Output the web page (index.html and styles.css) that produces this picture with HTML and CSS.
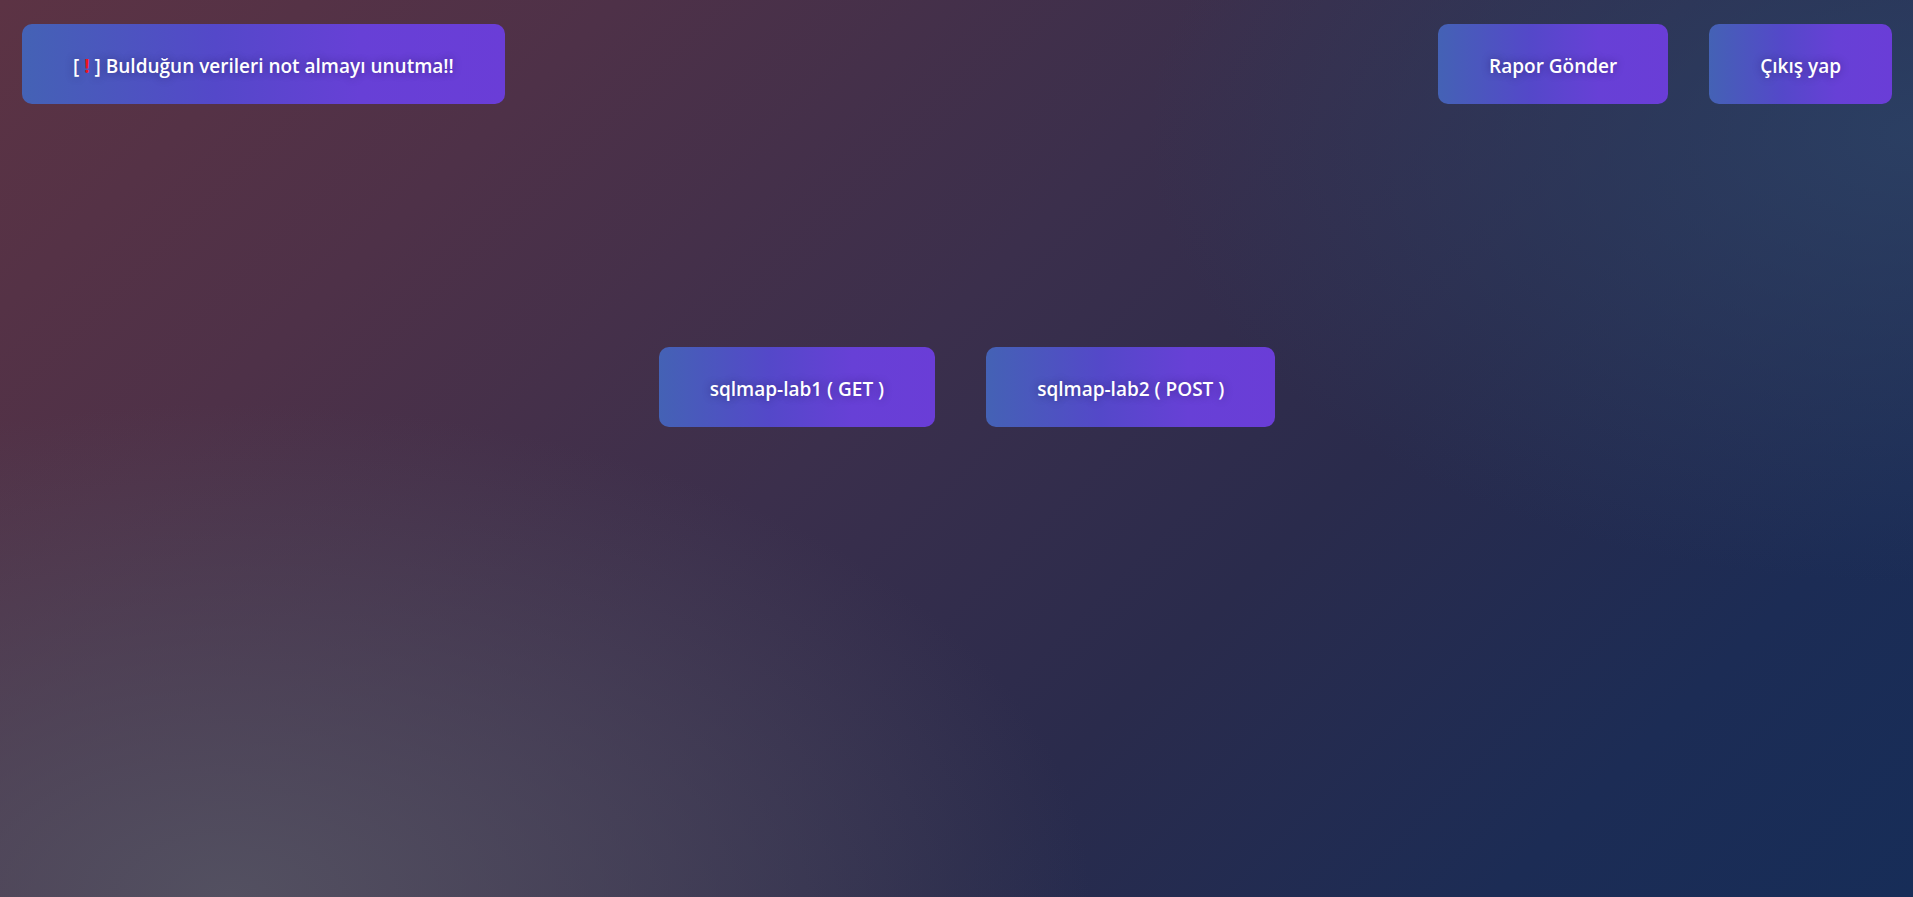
FILE: index.html
```html
<!DOCTYPE html>
<html lang="tr">
<head>
<meta charset="utf-8">
<title>sqlmap lab</title>
<link rel="stylesheet" href="styles.css">
</head>
<body>
<header class="topbar">
  <div class="btn notice">[ <span class="bang">!</span> ] Bulduğun verileri not almayı unutma!!</div>
  <nav class="actions">
    <a class="btn" href="#">Rapor Gönder</a>
    <a class="btn" href="#">Çıkış yap</a>
  </nav>
</header>
<main class="labs">
  <a class="btn" href="#">sqlmap-lab1 ( GET )</a>
  <a class="btn" href="#">sqlmap-lab2 ( POST )</a>
</main>
</body>
</html>
```
FILE: styles.css
```css
html, body {
  margin: 0;
  height: 100%;
}
body {
  font-family: "Open Sans", "Noto Sans", "Liberation Sans", sans-serif;
  background:
    radial-gradient(ellipse 45% 55% at 12% 100%, rgba(84, 82, 98, 0.95), rgba(84, 82, 98, 0) 100%),
    radial-gradient(ellipse 40% 50% at 100% 15%, rgba(44, 66, 102, 0.85), rgba(44, 66, 102, 0) 100%),
    linear-gradient(135deg, #5c3344 0%, #4e3148 22%, #3b2f4c 45%, #2a2b4c 65%, #1c2c55 85%, #172d58 100%);
  color: #fff;
  overflow: hidden;
}
.topbar {
  display: flex;
  justify-content: space-between;
  align-items: flex-start;
  padding: 24px 21px 0 22px;
}
.actions {
  display: flex;
  gap: 41px;
}
.btn {
  display: inline-block;
  padding: 28px 51px 24px;
  line-height: 28px;
  font-size: 19px;
  font-weight: 600;
  color: #fff;
  text-decoration: none;
  border-radius: 10px;
  background: linear-gradient(90deg, #4462b5 0%, #5448c9 40%, #6740d6 70%, #6a3dd7 100%);
  text-shadow: 0 0 8px rgba(20, 10, 50, 0.4);
  white-space: nowrap;
}
.bang {
  color: #f0141e;
  font-weight: 700;
  text-shadow: none;
}
.labs {
  display: flex;
  justify-content: center;
  gap: 51px;
  margin-top: 243px;
  padding-left: 21px;
}
```
